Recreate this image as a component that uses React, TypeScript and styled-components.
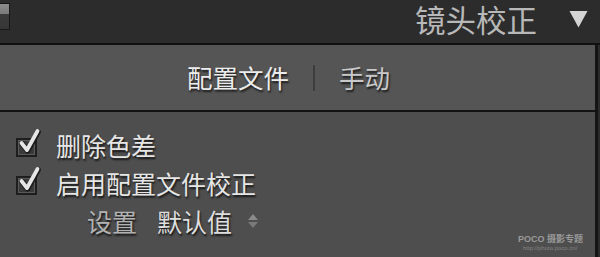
import styled, { createGlobalStyle } from 'styled-components';

const GlobalStyle = createGlobalStyle`
  html, body {
    margin: 0;
    padding: 0;
    background: #2b2b2b;
  }
  * {
    box-sizing: border-box;
  }
`;

const Frame = styled.div`
  width: 600px;
  height: 257px;
  overflow: hidden;
  background: #2b2b2b;
  font-family: 'Noto Sans CJK SC', 'Noto Sans', sans-serif;
  display: flex;
  flex-direction: column;
`;

const Header = styled.div`
  height: 45px;
  flex: none;
  display: flex;
  align-items: flex-start;
  justify-content: space-between;
  padding: 0 12px 0 0;
  background: #2c2c2c;
  border-bottom: 2px solid #111;
`;

const Stub = styled.div`
  margin-top: 3px;
  width: 10px;
  height: 27px;
  border: 1px solid #181818;
  border-left: none;
  background: linear-gradient(#8c8c8c 0, #7a7a7a 40%, #3a3a3a 42%, #363636 100%);
`;

const TitleGroup = styled.div`
  display: flex;
  align-items: center;
  gap: 32px;
  padding-top: 1px;
`;

const Title = styled.span`
  font-size: 30.5px;
  line-height: 36px;
  color: #b8b8b8;
  white-space: nowrap;
`;

const Panel = styled.div<{ tone: string }>`
  width: 598px;
  background: ${(p) => p.tone};
  border-right: 3px solid #141414;
`;

const TabBar = styled(Panel)`
  height: 67px;
  flex: none;
  display: flex;
  align-items: center;
  justify-content: center;
  gap: 24px;
  padding-right: 18px;
  border-bottom: 2px solid #121212;
`;

const Tab = styled.span<{ active?: boolean }>`
  font-size: 25.5px;
  line-height: 1.2;
  color: ${(p) => (p.active ? '#ececec' : '#c9c9c9')};
  text-shadow: 1px 2px 2px rgba(0, 0, 0, 0.7);
`;

const TabDivider = styled.span`
  width: 2px;
  height: 26px;
  background: #3d3d3d;
`;

const Body = styled(Panel)`
  flex: 1;
  position: relative;
  padding: 14px 0 0 16px;
  display: flex;
  flex-direction: column;
`;

const Row = styled.div<{ indent?: number }>`
  height: 38px;
  display: flex;
  align-items: center;
  padding-left: ${(p) => p.indent ?? 0}px;
`;

const Label = styled.span<{ dim?: boolean }>`
  font-size: 25px;
  line-height: 1.2;
  color: ${(p) => (p.dim ? '#b2b2b2' : '#e6e6e6')};
  text-shadow: 1px 2px 2px rgba(0, 0, 0, 0.75);
`;

const CheckBox = styled.span`
  position: relative;
  flex: none;
  width: 21px;
  height: 19px;
  margin: 5px 19px 0 0;
  background: #3a3a3a;
  border: 2px solid #1e1e1e;
  box-shadow: inset 0 0 0 1px #5a5a5a;
`;

const Tick = styled.svg`
  position: absolute;
  left: 0px;
  top: -12px;
  width: 22px;
  height: 26px;
  overflow: visible;
`;

const Value = styled.span`
  margin-left: 20px;
  font-size: 25px;
  line-height: 1.2;
  color: #dedede;
  text-shadow: 1px 2px 2px rgba(0, 0, 0, 0.75);
`;

const Spinner = styled.svg`
  margin-left: 14px;
  width: 14px;
  height: 16px;
`;

const Watermark = styled.div`
  position: absolute;
  right: 12px;
  bottom: 6px;
  display: flex;
  flex-direction: column;
  align-items: flex-start;
  color: #9a9a9a;
  font-family: 'Liberation Sans', 'Noto Sans CJK SC', sans-serif;
  line-height: 1;
`;

const MarkTop = styled.span`
  font-size: 9px;
  font-weight: bold;
  white-space: nowrap;
`;

const MarkBottom = styled.span`
  font-size: 6px;
  margin: 1px 0 0 5px;
  color: #858585;
  white-space: nowrap;
`;

const Check = () => (
  <CheckBox>
    <Tick viewBox="0 0 22 26">
      <path
        d="M3.5 15 L9 22 L19.5 3"
        fill="none"
        stroke="#1c1c1c"
        strokeWidth="5.5"
        strokeLinecap="round"
        strokeLinejoin="round"
        transform="translate(0.6 0.8)"
      />
      <path
        d="M3.5 15 L9 22 L19.5 3"
        fill="none"
        stroke="#e6e6e6"
        strokeWidth="3.8"
        strokeLinecap="round"
        strokeLinejoin="round"
      />
    </Tick>
  </CheckBox>
);

export default function App() {
  return (
    <>
      <GlobalStyle />
      <Frame>
        <Header>
          <Stub />
          <TitleGroup>
            <Title>镜头校正</Title>
            <svg width="19" height="18" viewBox="0 0 19 18">
              <path d="M0.5 1 L18.5 1 L9.5 17.5 Z" fill="#d4d4d4" />
            </svg>
          </TitleGroup>
        </Header>
        <TabBar tone="#555555">
          <Tab active>配置文件</Tab>
          <TabDivider />
          <Tab>手动</Tab>
        </TabBar>
        <Body tone="#4e4e4e">
          <Row>
            <Check />
            <Label>删除色差</Label>
          </Row>
          <Row>
            <Check />
            <Label>启用配置文件校正</Label>
          </Row>
          <Row indent={71}>
            <Label dim>设置</Label>
            <Value>默认值</Value>
            <Spinner viewBox="0 0 14 16">
              <path d="M7 1 L12 7 L2 7 Z" fill="#8a8a8a" />
              <path d="M2 9 L12 9 L7 15 Z" fill="#7a7a7a" />
            </Spinner>
          </Row>
          <Watermark>
            <MarkTop>POCO 摄影专题</MarkTop>
            <MarkBottom>http://photo.poco.cn/</MarkBottom>
          </Watermark>
        </Body>
      </Frame>
    </>
  );
}
